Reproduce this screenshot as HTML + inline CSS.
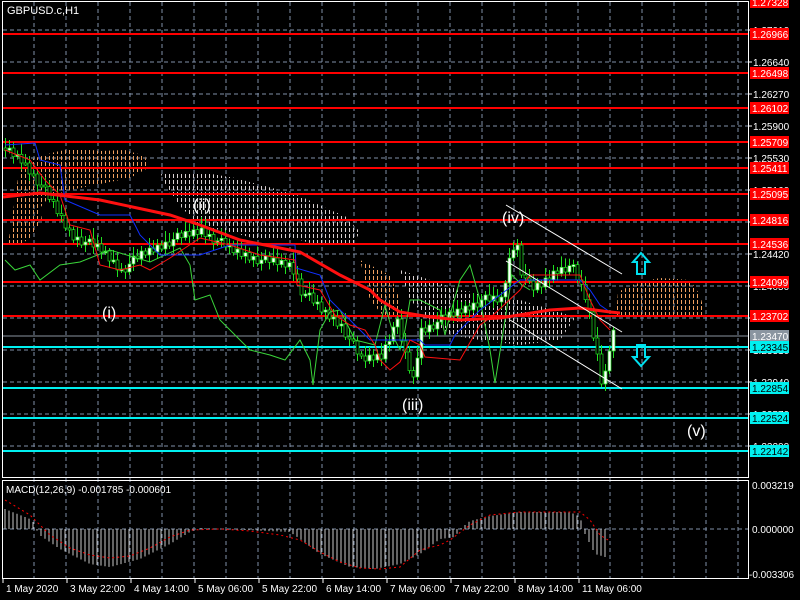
<!DOCTYPE html>
<html><head><meta charset="utf-8"><style>
html,body{margin:0;padding:0;background:#000;width:800px;height:600px;overflow:hidden}
svg{display:block}
text{font-family:"Liberation Sans",sans-serif}
</style></head><body>
<svg id="s" width="800" height="600" xmlns="http://www.w3.org/2000/svg">
<defs>
<pattern id="po" width="4" height="6" patternUnits="userSpaceOnUse"><rect x="1" y="0" width="1" height="4" fill="#f0a060"/></pattern>
<pattern id="pw" width="4" height="6" patternUnits="userSpaceOnUse"><rect x="1" y="0" width="1" height="4" fill="#d8d0d0"/></pattern>
</defs>
<rect width="800" height="600" fill="#000"/>
<g id="grid" stroke="#8090a8" stroke-width="1" stroke-dasharray="4,3"></g>
<!-- clouds -->
<polygon fill="url(#po)" points="20,165 35,158 55,152 75,148 100,151 125,150 145,156 148,168 130,178 100,184 70,190 50,196 40,208 42,220 30,238 20,245 8,245"/>
<polygon fill="url(#pw)" points="160,172 200,172 235,178 265,186 300,196 330,210 345,216 360,232 352,246 320,246 300,240 260,240 230,232 200,226 180,206 168,190"/>
<polygon fill="url(#pw)" points="400,270 430,280 460,290 490,295 520,300 560,312 575,318 560,340 520,345 480,340 450,335 430,320 410,300"/>
<polygon fill="url(#po)" points="618,292 632,285 650,280 660,278 690,280 700,295 706,318 616,318"/>
<polygon fill="url(#po)" points="360,260 390,275 400,300 400,318 385,318 370,300"/>
<!-- horizontal level lines -->
<g stroke="#ff0000" stroke-width="2">
<line x1="3" x2="748" y1="34" y2="34"/><line x1="3" x2="748" y1="73" y2="73"/><line x1="3" x2="748" y1="108" y2="108"/>
<line x1="3" x2="748" y1="142" y2="142"/><line x1="3" x2="748" y1="168" y2="168"/><line x1="3" x2="748" y1="194" y2="194"/>
<line x1="3" x2="748" y1="220" y2="220"/><line x1="3" x2="748" y1="244" y2="244"/><line x1="3" x2="748" y1="282" y2="282"/>
<line x1="3" x2="748" y1="316" y2="316"/>
</g>
<line x1="3" x2="748" y1="336" y2="336" stroke="#8a95a0" stroke-width="1"/>
<g stroke="#00f0f0" stroke-width="2">
<line x1="3" x2="748" y1="347" y2="347"/><line x1="3" x2="748" y1="388" y2="388"/><line x1="3" x2="748" y1="418" y2="418"/><line x1="3" x2="748" y1="451" y2="451"/>
</g>
<g id="candles"></g>
<g fill="none" stroke-width="1">
<polyline stroke="#3ad53a" points="5,260 15,270 30,265 40,280 60,265 80,262 110,250 150,262 180,248 190,265 195,300 210,295 220,320 240,340 250,350 270,355 285,360 300,340 310,360 313,385 320,330 330,312 340,310 355,340 375,345 385,305 395,340 400,350 405,330 410,300 420,300 440,310 445,335 450,315 460,280 470,265 480,300 490,350 495,383 505,320 512,275 522,285 530,290"/>
<polyline stroke="#1030ff" points="5,145 35,143 40,160 60,165 65,200 100,215 130,215 140,235 160,255 200,255 230,245 295,245 296,268 320,275 330,300 370,340 420,340 425,345 450,345 455,335 480,310 520,280 580,280 590,290 600,305 610,312"/>
<polyline stroke="#ff1010" points="5,150 30,160 45,180 60,195 70,225 90,230 100,265 120,270 140,265 150,270 170,258 200,238 230,245 260,255 295,260 297,285 320,290 335,315 350,325 365,330 375,345 380,360 390,370 400,362 410,340 420,345 425,357 460,360 480,325 490,318 520,290 530,275 580,275 590,300 600,320 610,330"/>
<polyline stroke="#ff1010" stroke-width="3" points="3,197 40,193 100,200 170,215 200,225 240,240 300,252 340,275 370,290 380,300 400,312 430,317 460,320 500,318 550,310 580,308 610,312 620,313"/>
<g stroke="#fff">
<line x1="506" y1="205" x2="622" y2="274"/><line x1="506" y1="261" x2="622" y2="332"/><line x1="510" y1="320" x2="622" y2="389"/>
</g>
<path stroke="#00e0f0" stroke-width="2" d="M641,253 L649,262 L645,262 L645,274 L637,274 L637,262 L633,262 Z"/>
<path stroke="#00e0f0" stroke-width="2" d="M641,366 L649,357 L645,357 L645,345 L637,345 L637,357 L633,357 Z"/>
</g>
<g fill="#fff" font-size="16">
<text x="102" y="318">(i)</text><text x="193" y="210">(ii)</text><text x="402" y="410">(iii)</text><text x="502" y="223">(iv)</text><text x="687" y="436">(v)</text>
</g>
<!-- frames -->
<rect x="2.5" y="1.5" width="746" height="476" fill="none" stroke="#fff"/>
<rect x="2.5" y="480.5" width="746" height="98" fill="none" stroke="#fff"/>
<text x="7" y="14" fill="#fff" font-size="11">GBPUSD.c,H1</text>
<text x="6" y="493" fill="#fff" font-size="10">MACD(12,26,9) -0.001785 -0.000601</text>
<line x1="3" x2="748" y1="529" y2="529" stroke="#8090a8" stroke-dasharray="4,3"/>
<g id="macd"></g>
<polyline fill="none" stroke="#ff0000" stroke-dasharray="2,3" points="5,500 30,515 50,535 70,548 90,555 110,558 130,556 150,548 170,537 190,530 220,529 250,531 280,535 300,540 320,552 340,562 360,568 380,569 400,567 420,550 440,545 450,540 470,525 490,515 520,512 580,512 590,520 600,535 608,540"/>
<g id="yaxis" font-size="10"></g>
<g fill="#fff" font-size="10">
<text x="752" y="489">0.003219</text><text x="752" y="533">0.000000</text><text x="749" y="578">-0.003306</text>
</g>
<g fill="#fff" font-size="10" id="xaxis"></g>
</svg>
<script>
(function(){
var NS="http://www.w3.org/2000/svg";
function el(p,t,a,txt){var e=document.createElementNS(NS,t);for(var k in a)e.setAttribute(k,a[k]);if(txt)e.textContent=txt;document.getElementById(p).appendChild(e);return e;}
function interp(k,x){for(var i=1;i<k.length;i++){if(x<=k[i][0]){var a=k[i-1],b=k[i];return a[1]+(b[1]-a[1])*(x-a[0])/(b[0]-a[0]);}}return k[k.length-1][1];}
for(var x=34;x<748;x+=32)el("grid","line",{x1:x,x2:x,y1:2,y2:578});
for(var y=30;y<470;y+=32)el("grid","line",{x1:3,x2:748,y1:y,y2:y});
var gl=["1.27010","1.26640","1.26270","1.25900","1.25530","1.25160","1.24790","1.24420","1.24050","1.23680","1.23310","1.22940","1.22570","1.22200"];
for(var i=0;i<gl.length;i++){var yy=30+32*i;el("yaxis","line",{x1:748,x2:752,y1:yy,y2:yy,stroke:"#fff"});el("yaxis","text",{x:753,y:yy+4,fill:"#fff"},gl[i]);}
var lv=[[2,"1.27328","#ff0000"],[34,"1.26966","#ff0000"],[73,"1.26498","#ff0000"],[108,"1.26102","#ff0000"],[142,"1.25709","#ff0000"],[168,"1.25411","#ff0000"],[194,"1.25095","#ff0000"],[220,"1.24816","#ff0000"],[244,"1.24536","#ff0000"],[282,"1.24099","#ff0000"],[316,"1.23702","#ff0000"],[336,"1.23470","#8a95a0"],[347,"1.23345","#00f0f0"],[388,"1.22854","#00f0f0"],[418,"1.22524","#00f0f0"],[451,"1.22142","#00f0f0"]];
lv.forEach(function(l){el("yaxis","rect",{x:750,y:l[0]-6,width:39,height:12,fill:l[2]});el("yaxis","text",{x:752,y:l[0]+4,fill:(l[2]=="#00f0f0"?"#000":"#fff")},l[1]);});
var xl=[[2,"1 May 2020"],[66,"3 May 22:00"],[130,"4 May 14:00"],[194,"5 May 06:00"],[258,"5 May 22:00"],[322,"6 May 14:00"],[386,"7 May 06:00"],[450,"7 May 22:00"],[514,"8 May 14:00"],[578,"11 May 06:00"]];
xl.forEach(function(l){el("xaxis","line",{x1:l[0]+1,x2:l[0]+1,y1:579,y2:583,stroke:"#fff"});el("xaxis","text",{x:l[0]+4,y:592},l[1]);});
var ck=[[5,150],[20,160],[40,185],[55,210],[70,235],[100,250],[120,270],[140,255],[170,240],[200,230],[230,250],[260,260],[290,265],[300,290],[320,310],[340,325],[360,360],[380,355],[395,320],[405,360],[412,380],[420,330],[440,320],[460,310],[480,300],[500,300],[510,250],[515,240],[520,270],[530,290],[540,285],[555,270],[570,265],[585,300],[595,350],[600,380],[605,370],[610,330]];
var prev=interp(ck,2);
for(var x=4;x<=612;x+=4){var c=interp(ck,x)+((x*7)%11-5);var o=prev;var hi=Math.min(o,c)-3-(x*13)%9,lo=Math.max(o,c)+3+(x*5)%8;
el("candles","line",{x1:x+1.5,x2:x+1.5,y1:hi,y2:lo,stroke:"#20e020"});
var by=Math.min(o,c),h=Math.max(2,Math.abs(o-c));
el("candles","rect",{x:x,y:by,width:3,height:h,fill:(c<o?"#fff":"#000"),stroke:"#20e020","stroke-width":"0.7"});prev=c;}
var mk=[[5,20],[30,10],[35,5],[38,-5],[60,-20],[90,-35],[110,-38],[140,-30],[170,-15],[190,-3],[200,1],[290,-3],[300,-10],[320,-25],[350,-38],[375,-40],[400,-35],[420,-25],[440,-10],[455,-8],[460,0],[470,8],[490,13],[520,17],[570,17],[580,12],[585,-5],[595,-25],[605,-28]];
for(var x2=5;x2<=607;x2+=4){var v=interp(mk,x2);el("macd","line",{x1:x2,x2:x2,y1:529,y2:529-v,stroke:"#c8c8c8"});}
})();
</script>
</body></html>
